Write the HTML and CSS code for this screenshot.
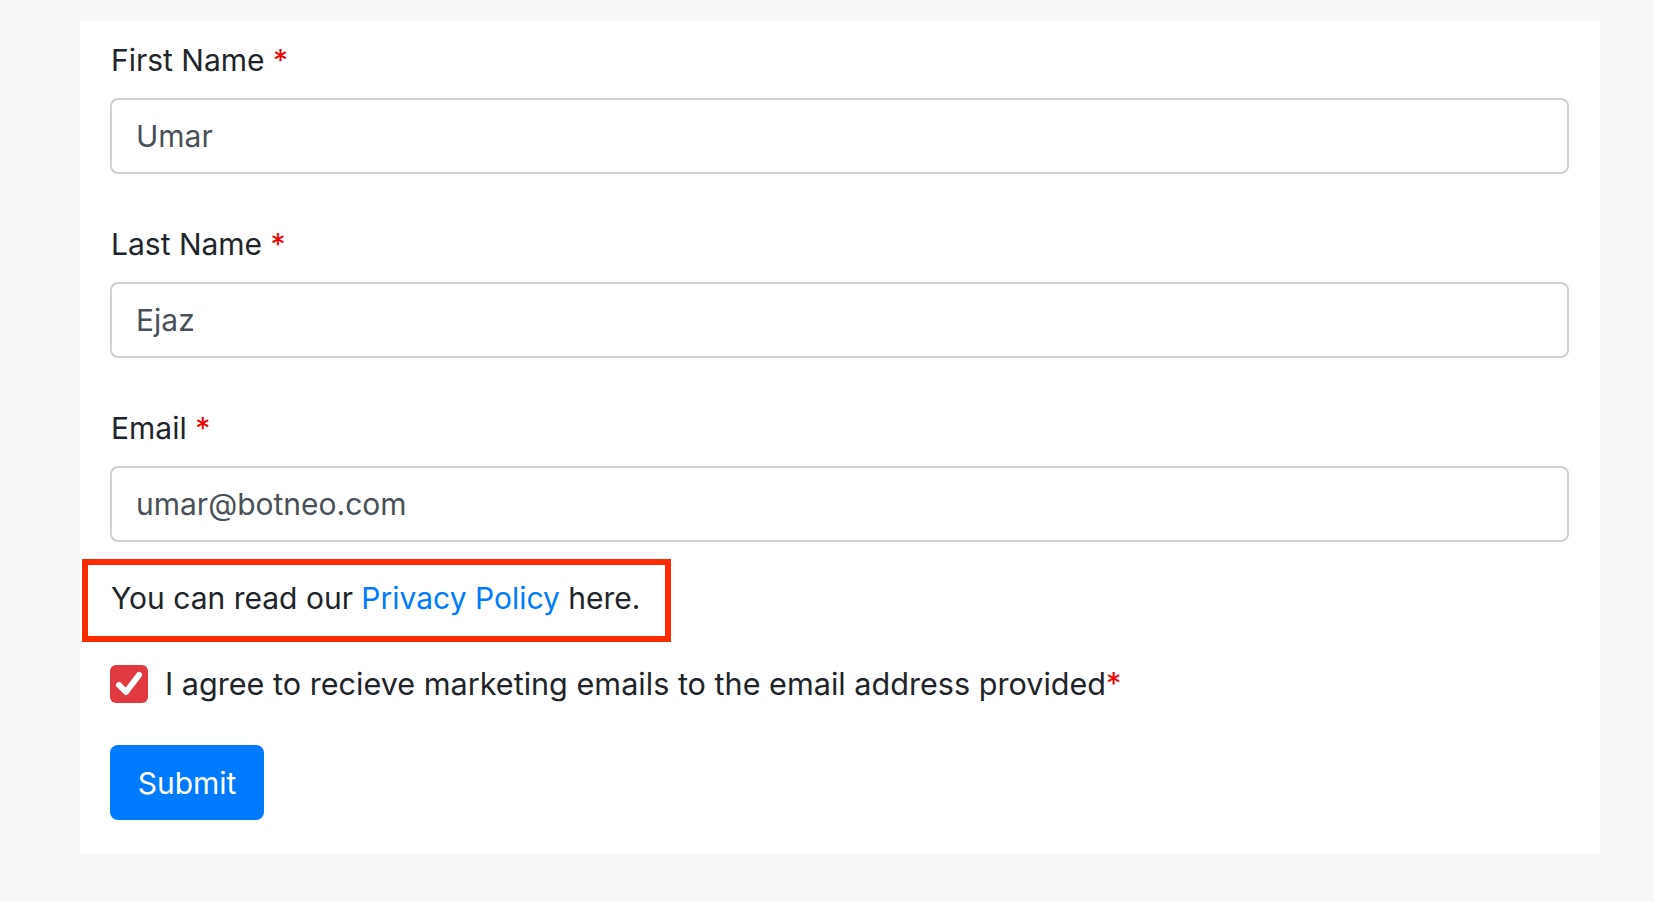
FILE: index.html
```html
<!DOCTYPE html>
<html>
<head>
<meta charset="utf-8">
<link rel="stylesheet" href="styles.css">
</head>
<body>
<div class="card">
  <form class="form">
    <div class="group">
      <label class="label">First Name <span class="req">*</span></label>
      <div class="input">Umar</div>
    </div>
    <div class="group">
      <label class="label">Last Name <span class="req">*</span></label>
      <div class="input">Ejaz</div>
    </div>
    <div class="group last">
      <label class="label">Email <span class="req">*</span></label>
      <div class="input">umar@botneo.com</div>
    </div>
    <div class="highlight">
      <p class="policy">You can read our <a class="link" href="#">Privacy Policy</a> here.</p>
    </div>
    <div class="check-row">
      <span class="checkbox">
        <svg width="38" height="38" viewBox="0 0 38 38">
          <rect x="0" y="0" width="38" height="38" rx="6" fill="#e0393f"/>
          <path d="M9 20 L16 27 L29 10" fill="none" stroke="#fff" stroke-width="6" stroke-linecap="round" stroke-linejoin="round"/>
        </svg>
      </span>
      <span class="check-label">I agree to recieve marketing emails to the email address provided<span class="req">*</span></span>
    </div>
    <button class="submit" type="button">Submit</button>
  </form>
</div>
</body>
</html>
```

FILE: styles.css
```css
html, body {
  margin: 0;
  padding: 0;
}
body {
  background: #f8f8f8;
  font-family: Inter, "Liberation Sans", Arial, sans-serif;
  color: #212529;
  height: 902px;
  overflow: hidden;
}
.card {
  margin: 21px 0 0 80px;
  width: 1520px;
  height: 832px;
  background: #ffffff;
  box-sizing: border-box;
  padding: 16px 31px 0 30px;
}
.form {
  display: flex;
  flex-direction: column;
  align-items: flex-start;
}
.group {
  display: flex;
  flex-direction: column;
  width: 100%;
  margin-bottom: 47px;
}
.group.last {
  margin-bottom: 17px;
}
.label {
  font-size: 30px;
  line-height: 46px;
  height: 46px;
  margin-bottom: 15px;
  padding-left: 1px;
}
.req {
  color: #f00000;
}
.input {
  box-sizing: border-box;
  height: 76px;
  width: 100%;
  border: 2px solid #d0d3d6;
  border-radius: 8px;
  padding: 0 24px;
  font-size: 30px;
  line-height: 72px;
  color: #495057;
}
.highlight {
  box-sizing: border-box;
  margin-left: -28px;
  width: 589px;
  height: 83px;
  border: 6px solid #ff2a00;
  padding: 0 0 6px 23px;
  display: flex;
  align-items: center;
}
.policy {
  margin: 0;
  font-size: 30px;
  line-height: 46px;
  color: #212529;
}
.link {
  color: #007bff;
  text-decoration: none;
}
.check-row {
  display: flex;
  align-items: center;
  margin-top: 22px;
  height: 39px;
}
.checkbox {
  display: block;
  width: 38px;
  height: 38px;
  margin-right: 17px;
}
.checkbox svg {
  display: block;
}
.check-label {
  font-size: 30.6px;
  line-height: 46px;
  color: #212529;
}
.submit {
  margin-top: 42px;
  width: 154px;
  height: 75px;
  border: none;
  border-radius: 8px;
  background: #007bff;
  color: #ffffff;
  font-family: Inter, "Liberation Sans", Arial, sans-serif;
  font-size: 30px;
  padding: 0;
}
```
